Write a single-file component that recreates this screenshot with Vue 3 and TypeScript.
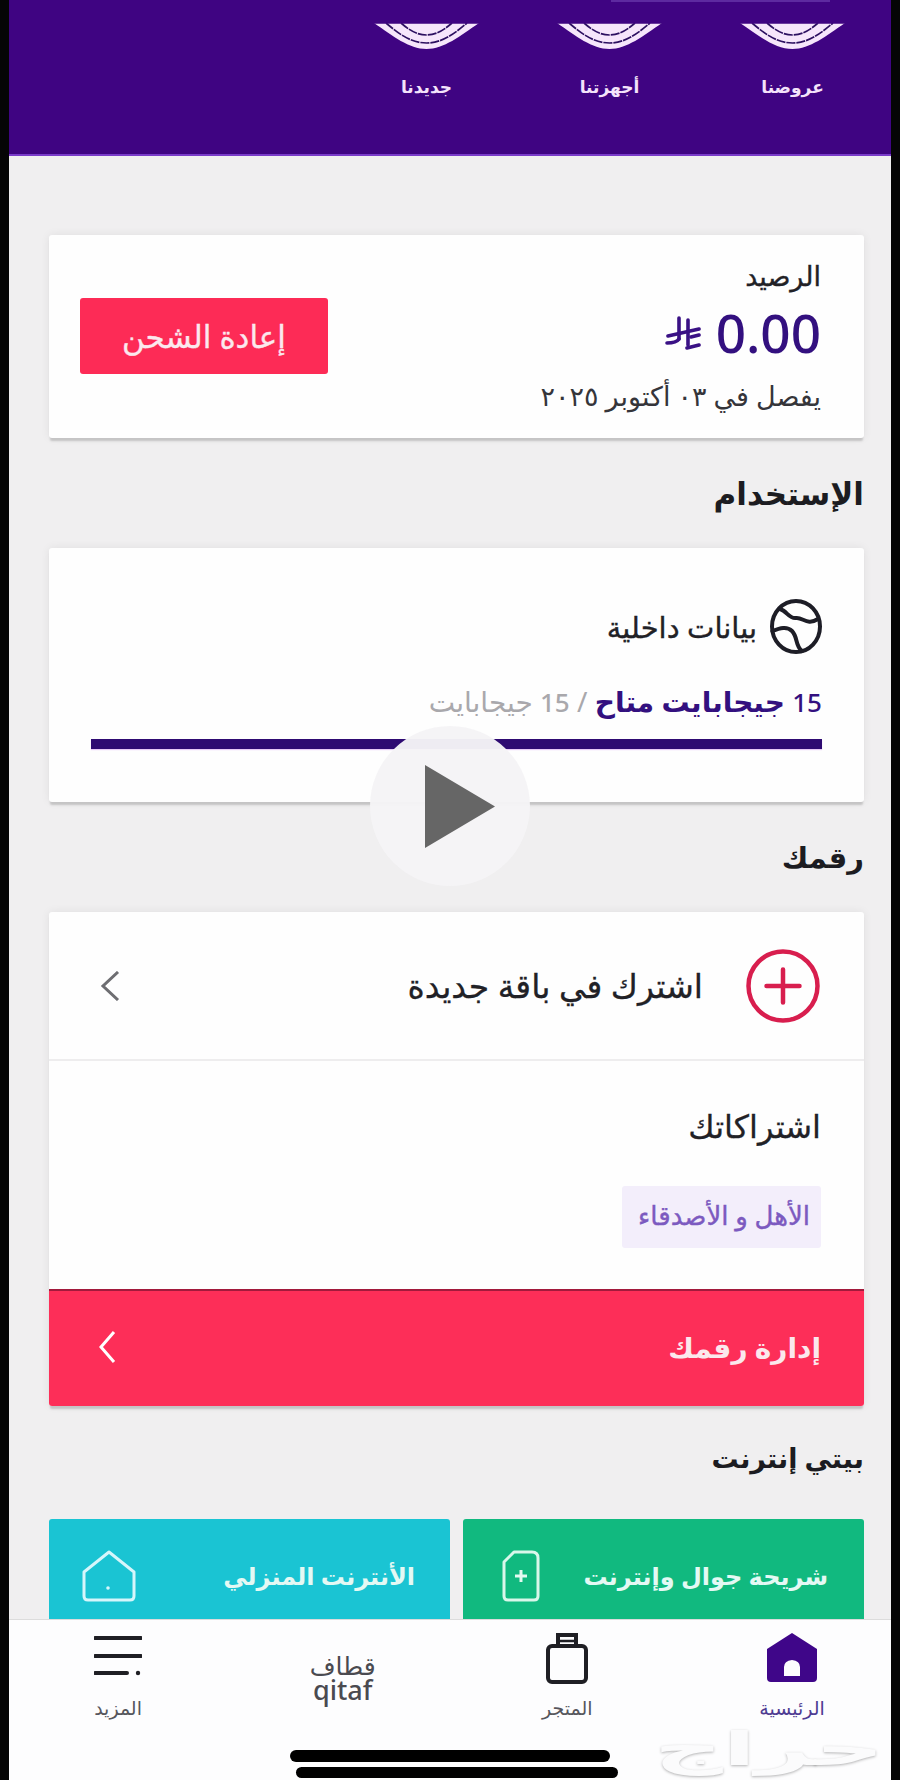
<script setup lang="ts">
const shortcuts: string[] = ['عروضنا', 'أجهزتنا', 'جديدنا']
</script>

<template>
  <div class="screen" dir="rtl">
    <header class="hero">
      <div class="hero-line"></div>
      <div class="shortcuts">
        <div v-for="s in shortcuts" :key="s" class="shortcut">
          <svg class="arc" viewBox="0 0 107 28" width="107" height="28" aria-hidden="true">
            <path d="M1 1C20 14 36 27 53.500 27C71 27 87 14 106 1Z" fill="#f6e6fb" />
            <path d="M13 1C26 12 38 21 53.500 21C69 21 81 12 94 1" fill="none" stroke="#2c1060" stroke-width="1.700" stroke-dasharray="9 1" />
            <path d="M28 1C36 8 44 13 53.500 13C63 13 71 8 79 1" fill="none" stroke="#2c1060" stroke-width="1.700" stroke-dasharray="9 1" />
            <path d="M1 1H106" stroke="#3f0480" stroke-width="1.500" />
          </svg>
          <span class="shortcut-label">{{ s }}</span>
        </div>
      </div>
    </header>

    <main class="content">
      <section class="card balance">
        <div class="balance-info">
          <div class="balance-title">الرصيد</div>
          <div class="balance-amount" dir="ltr">
            <svg class="riyal" viewBox="0 0 36 36" width="36" height="36" aria-hidden="true">
              <g fill="none" stroke="#3a1185" stroke-width="3.600" stroke-linecap="round">
                <path d="M14 3V24" />
                <path d="M23 5V30" />
                <path d="M3 21L34 14" />
                <path d="M2 28C8 28 12 27 14 24" />
                <path d="M26 22L34 20" />
                <path d="M22 33L34 30" />
              </g>
            </svg>
            <span>0.00</span>
          </div>
          <div class="balance-date">يفصل في ٠٣ أكتوبر ٢٠٢٥</div>
        </div>
        <button class="recharge" type="button">إعادة الشحن</button>
      </section>

      <h2 class="section-title first">الإستخدام</h2>

      <section class="card usage">
        <div class="usage-head">
          <svg viewBox="0 0 52 55" width="52" height="55" aria-hidden="true">
            <g fill="none" stroke="#1d1d26" stroke-width="4" stroke-linecap="round">
              <ellipse cx="26" cy="27.500" rx="24" ry="25.500" />
              <path d="M10 10C17 12 19 20 26 19C33 18 37 27 48 20" />
              <path d="M2.500 32C10 29 17 27 22 32C28 38 25 47 32 52" />
            </g>
          </svg>
          <span>بيانات داخلية</span>
        </div>
        <div class="usage-text">
          <span class="avail"><b class="num">15</b> جيجابايت متاح</span>
          <span class="total"> / <b class="num light">15</b> جيجابايت</span>
        </div>
        <div class="bar"></div>
      </section>

      <h2 class="section-title">رقمك</h2>

      <section class="card number">
        <div class="subscribe">
          <svg class="plus" viewBox="0 0 74 74" width="74" height="74" aria-hidden="true">
            <circle cx="37" cy="37" r="34.500" fill="none" stroke="#d81e4e" stroke-width="4.500" />
            <path d="M20.500 37H53.500M37 20.500V53.500" stroke="#d81e4e" stroke-width="4.500" stroke-linecap="round" />
          </svg>
          <span class="subscribe-text">اشترك في باقة جديدة</span>
          <svg class="chev" viewBox="0 0 20 30" width="20" height="30" aria-hidden="true">
            <path d="M18 1L3 15L18 29" fill="none" stroke="#6e6e72" stroke-width="3" />
          </svg>
        </div>
        <div class="subs">
          <div class="subs-title">اشتراكاتك</div>
          <div class="chip">الأهل و الأصدقاء</div>
        </div>
        <div class="manage">
          <span>إدارة رقمك</span>
          <svg viewBox="0 0 18 32" width="18" height="32" aria-hidden="true">
            <path d="M16 1L3 16L16 31" fill="none" stroke="#fff" stroke-width="3" />
          </svg>
        </div>
      </section>

      <h2 class="section-title third">بيتي إنترنت</h2>

      <div class="tiles">
        <div class="tile green">
          <span>شريحة جوال وإنترنت</span>
          <svg viewBox="0 0 38 52" width="38" height="52" aria-hidden="true">
            <path d="M12 2H30Q36 2 36 8V46Q36 50 32 50H6Q2 50 2 46V12Z" fill="none" stroke="#d9f7ea" stroke-width="3" stroke-linejoin="round" />
            <path d="M13 26H25M19 20V32" stroke="#e4faf1" stroke-width="3" />
          </svg>
        </div>
        <div class="tile cyan">
          <span>الأنترنت المنزلي</span>
          <svg viewBox="0 0 54 52" width="54" height="52" aria-hidden="true">
            <path d="M27 2L52 22V46Q52 50 48 50H6Q2 50 2 46V22Z" fill="none" stroke="#d6f6fb" stroke-width="3" stroke-linejoin="round" />
            <circle cx="26" cy="38" r="1.800" fill="#d6f6fb" />
          </svg>
        </div>
      </div>
    </main>

    <nav class="nav">
      <div class="nav-item active">
        <svg viewBox="0 0 50 50" width="50" height="50" aria-hidden="true">
          <path fill-rule="evenodd" d="M25 1L50 17V46Q50 50 46 50H4Q0 50 0 46V17ZM17 44H33V35Q33 29 25 28Q17 29 17 35Z" fill="#3f0689" />
        </svg>
        <span>الرئيسية</span>
      </div>
      <div class="nav-item">
        <svg viewBox="0 0 44 52" width="44" height="52" aria-hidden="true">
          <g fill="none" stroke="#1f1f24" stroke-width="4">
            <rect x="3" y="14" width="38" height="36" rx="4" />
            <path d="M13 14V3H31V14" />
            <path d="M13 9H31" stroke-width="2.500" />
          </g>
        </svg>
        <span>المتجر</span>
      </div>
      <div class="nav-item qitaf">
        <div class="qitaf-ar">قطاف</div>
        <div class="qitaf-en" dir="ltr">qitaf</div>
      </div>
      <div class="nav-item">
        <svg viewBox="0 0 48 50" width="48" height="50" aria-hidden="true">
          <path d="M1 6H47M1 24H47M1 41H33" stroke="#1f1f24" stroke-width="4" stroke-linecap="round" />
          <circle cx="44" cy="41" r="2.200" fill="#1f1f24" />
        </svg>
        <span>المزيد</span>
      </div>
    </nav>

    <div class="play" aria-hidden="true">
      <svg viewBox="0 0 70 83" width="70" height="83"><path d="M0 0L70 41.500L0 83Z" fill="#666" /></svg>
    </div>
    <div class="watermark">حراج</div>
    <div class="home-bar one"></div>
    <div class="home-bar two"></div>
  </div>
</template>

<style>
html, body { margin: 0; background: #000; }
</style>

<style scoped>
.screen {
  position: relative;
  box-sizing: border-box;
  width: 900px;
  height: 1780px;
  overflow: hidden;
  display: flex;
  flex-direction: column;
  padding: 0 9px;
  background: #050505;
  font-family: "Noto Sans", "DejaVu Sans", sans-serif;
  color: #212126;
}
.hero {
  box-sizing: border-box;
  height: 156px;
  flex: none;
  background: #3f0482;
  border-bottom: 2px solid #7a3bc9;
}
.hero-line {
  width: 219px;
  height: 2px;
  margin-right: 61px;
  background: #5d2aa0;
}
.shortcuts {
  display: grid;
  grid-template-columns: repeat(3, 183px);
  padding: 20px 7px 0 0;
}
.shortcut {
  display: flex;
  flex-direction: column;
  align-items: center;
}
.arc { display: block; }
.shortcut-label {
  margin-top: 25px;
  font-size: 17px;
  line-height: 24px;
  font-weight: 700;
  color: #f4e3fb;
}
.content {
  flex: 1;
  min-height: 0;
  background: #f0eff0;
  padding: 79px 27px 0 40px;
  overflow: hidden;
}
.card {
  background: #fefefe;
  border-radius: 3px;
  box-shadow: 0 4px 2px -1px #c5c4c5, 0 0 10px rgba(0, 0, 0, .07);
}
.balance {
  height: 203px;
  box-sizing: border-box;
  padding: 26px 43px 0 31px;
  display: flex;
  justify-content: space-between;
}
.balance-title {
  font-size: 27px;
  line-height: 30px;
  -webkit-text-stroke: .35px currentColor;
}
.balance-amount {
  margin-top: 11px;
  display: flex;
  align-items: center;
  justify-content: flex-end;
  gap: 15px;
  font-size: 53px;
  line-height: 62px;
  font-weight: 500;
  color: #33107f;
}
.balance-date {
  margin-top: 17px;
  font-size: 27px;
  line-height: 30px;
  color: #35353a;
}
.recharge {
  width: 248px;
  height: 76px;
  margin-top: 37px;
  border: 0;
  border-radius: 3px;
  background: #fd2b56;
  color: #fbe9ee;
  font-family: inherit;
  font-size: 31px;
  -webkit-text-stroke: .35px currentColor;
}
.section-title {
  margin: 35px 0 35px;
  font-size: 29px;
  line-height: 40px;
  font-weight: 700;
  color: #1c1c21;
}
.section-title.first { font-size: 31px; }
.section-title.third { margin: 32px 0 41px; font-size: 27px; }
.usage {
  height: 254px;
  box-sizing: border-box;
  padding: 51px 42px 0 42px;
}
.usage-head {
  display: flex;
  align-items: center;
  gap: 13px;
  font-size: 29px;
  -webkit-text-stroke: .35px currentColor;
  height: 55px;
}
.usage-text {
  margin-top: 29px;
  font-size: 28px;
  line-height: 36px;
  font-weight: 700;
  white-space: nowrap;
}
.avail { color: #33107f; }
.total { color: #a9a8ac; font-weight: 400; }
.num { font-weight: 500; font-size: 26px; }
.light { color: #a9a8ac; }
.bar {
  height: 10px;
  margin-top: 19px;
  background: #2e0a72;
  box-shadow: 0 1px 1px #e6c8f7;
}
.number { overflow: hidden; }
.subscribe {
  height: 149px;
  box-sizing: border-box;
  border-bottom: 2px solid #eeedee;
  padding: 0 44px 0 51px;
  display: flex;
  align-items: center;
  gap: 43px;
}
.subscribe-text {
  flex: 1;
  font-size: 33px;
  white-space: nowrap;
  -webkit-text-stroke: .3px currentColor;
}
.subs {
  height: 228px;
  box-sizing: border-box;
  padding: 46px 43px 0;
}
.subs-title {
  font-size: 32px;
  line-height: 38px;
  -webkit-text-stroke: .3px currentColor;
}
.chip {
  margin-top: 41px;
  width: 199px;
  height: 62px;
  box-sizing: border-box;
  padding: 0 11px;
  line-height: 58px;
  border-radius: 3px;
  background: #f3eefb;
  color: #7c5ac0;
  font-size: 26px;
  -webkit-text-stroke: .4px currentColor;
  white-space: nowrap;
}
.manage {
  height: 117px;
  box-sizing: border-box;
  padding: 0 43px 3px 49px;
  display: flex;
  align-items: center;
  justify-content: space-between;
  background: #fd2e58;
  border-top: 2px solid #a21a3c;
  color: #fbe8ed;
  font-size: 28px;
  font-weight: 700;
}
.tiles {
  display: grid;
  grid-template-columns: 401px 401px;
  gap: 13px;
}
.tile {
  height: 110px;
  box-sizing: border-box;
  border-radius: 3px 3px 0 0;
  padding: 3px 36px 0 22px;
  display: flex;
  align-items: center;
  justify-content: space-between;
  color: #e4f9f4;
  font-size: 24px;
  font-weight: 700;
}
.tile svg { flex: none; }
.green { background: #11b97f; }
.green svg { margin-left: 17px; }
.cyan { background: #1ac4d3; padding-right: 35px; padding-left: 33px; }
.nav {
  height: 161px;
  flex: none;
  box-sizing: border-box;
  background: #fdfdfe;
  border-top: 1px solid #dcdcdc;
  padding: 12px 49px 0 59px;
  display: grid;
  grid-template-columns: repeat(4, 100px);
  justify-content: space-between;
  align-items: start;
}
.nav-item {
  display: flex;
  flex-direction: column;
  align-items: center;
  height: 88px;
  font-size: 19px;
  color: #56565c;
  line-height: 24px;
}
.nav-item svg { flex: none; margin-bottom: auto; }
.nav-item.active span { color: #4e3b92; }
.qitaf { padding-top: 20px; box-sizing: border-box; color: #4a4a50; }
.qitaf-ar { font-size: 25px; line-height: 26px; font-weight: 500; }
.qitaf-en { font-size: 27px; line-height: 24px; font-weight: 500; }
.play {
  position: absolute;
  left: 370px;
  top: 726px;
  width: 160px;
  height: 160px;
  border-radius: 50%;
  background: rgba(245, 244, 246, .97);
  display: flex;
  align-items: center;
  justify-content: center;
}
.play svg { margin-left: 20px; }
.watermark {
  position: absolute;
  left: 724px;
  top: 1722px;
  width: 104px;
  text-align: center;
  font-size: 46px;
  line-height: 50px;
  font-weight: 700;
  white-space: nowrap;
  color: #fbfbfc;
  transform: scaleX(2.080);
  text-shadow: 0 1px 2px rgba(0, 0, 0, .3);
}
.home-bar {
  position: absolute;
  border-radius: 6px;
  background: #000;
}
.home-bar.one { left: 290px; top: 1750px; width: 320px; height: 12px; }
.home-bar.two { left: 296px; top: 1767px; width: 322px; height: 11px; }
</style>
